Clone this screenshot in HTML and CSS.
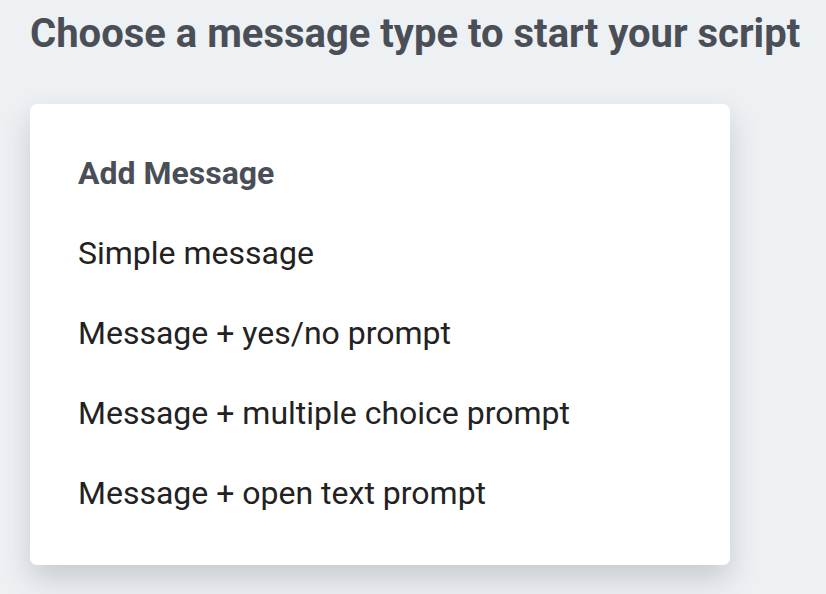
FILE: index.html
```html
<!DOCTYPE html>
<html>
<head>
<meta charset="utf-8">
<link rel="stylesheet" href="styles.css">
</head>
<body>
<div class="page">
  <h1 class="title">Choose a message type to start your script</h1>
  <div class="card">
    <div class="item heading">Add Message</div>
    <div class="item">Simple message</div>
    <div class="item">Message + yes/no prompt</div>
    <div class="item">Message + multiple choice prompt</div>
    <div class="item">Message + open text prompt</div>
  </div>
</div>
</body>
</html>
```
FILE: styles.css
```css
html, body {
  margin: 0;
  padding: 0;
  background: #eef1f4;
  font-family: Roboto, "Liberation Sans", sans-serif;
}
.page {
  padding: 11px 30px 40px 30px;
}
.title {
  margin: 0;
  font-size: 40px;
  line-height: 46px;
  font-weight: 700;
  color: #4a4f57;
  white-space: nowrap;
}
.card {
  margin-top: 47px;
  width: 700px;
  box-sizing: border-box;
  background: #fff;
  border-radius: 7px;
  box-shadow: 0 14px 30px rgba(40, 50, 60, 0.2);
  padding: 29px 48px 32px 48px;
}
.item {
  font-size: 32px;
  line-height: 80px;
  color: #222;
}
.item.heading {
  font-weight: 700;
  color: #4a4f57;
}
```
